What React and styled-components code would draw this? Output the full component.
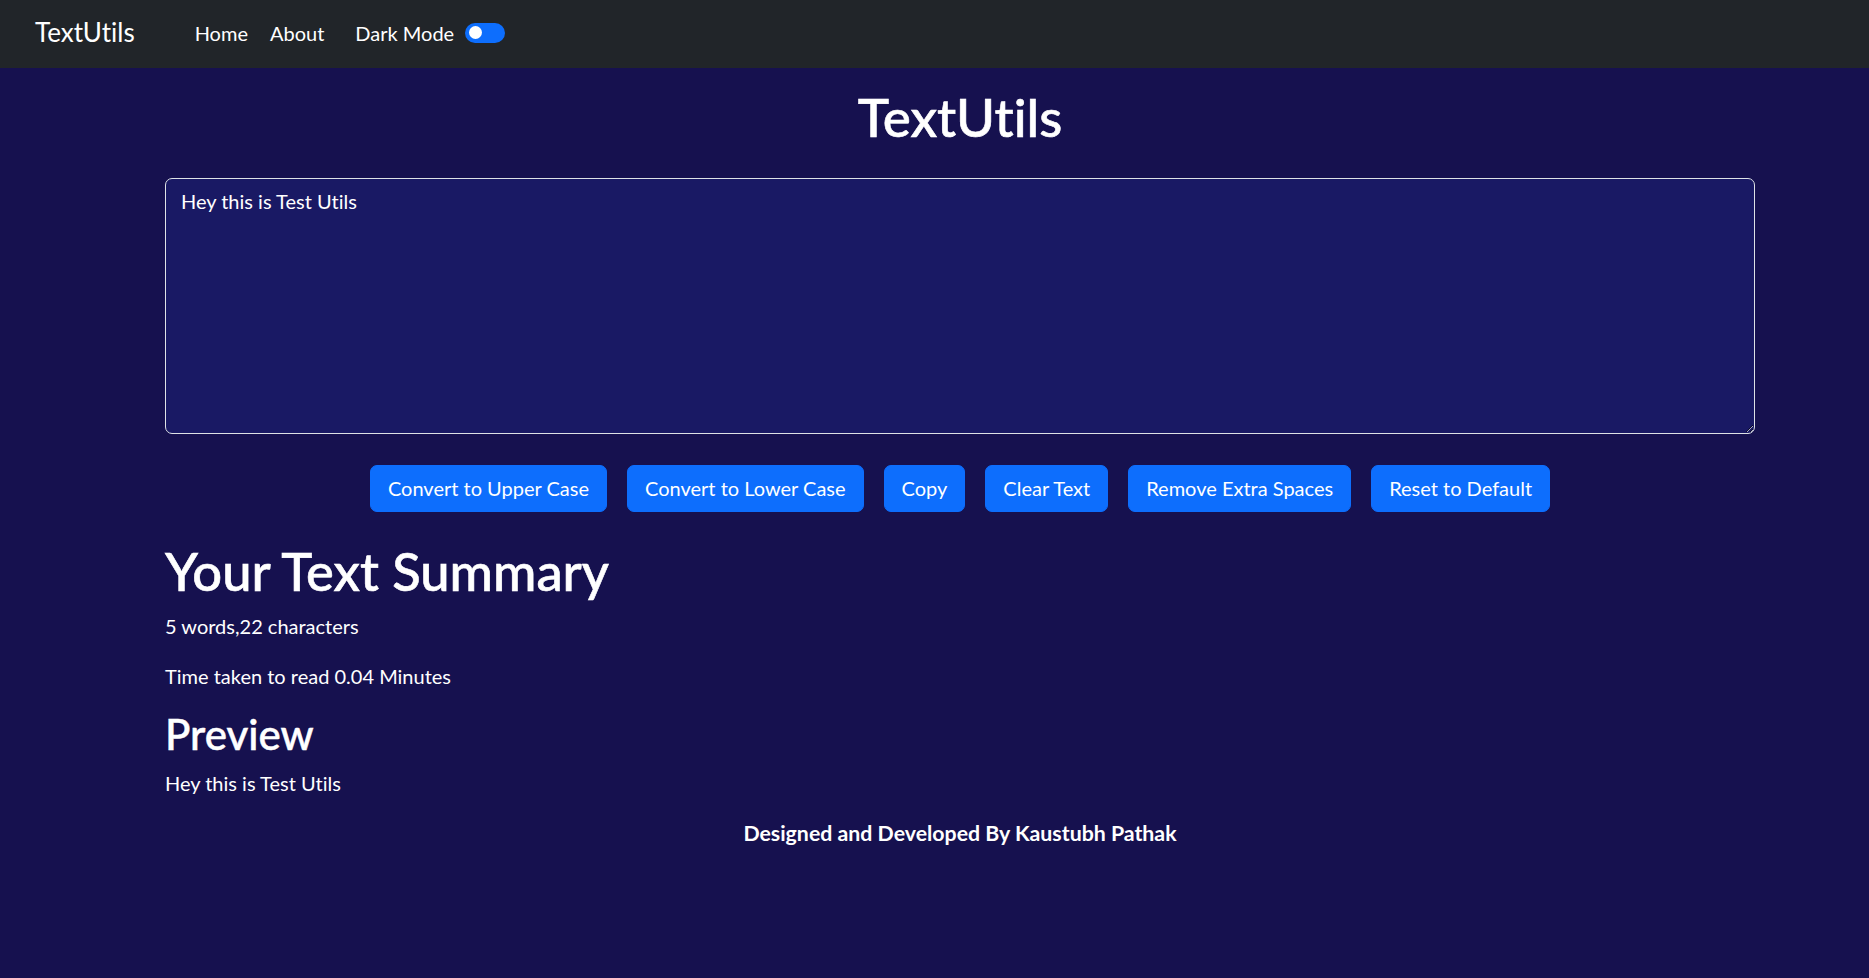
import React, { useState } from "react";
import styled, { createGlobalStyle } from "styled-components";

const GlobalStyle = createGlobalStyle`
  html, body {
    margin: 0;
    background: #16114f;
  }
  body {
    font-family: Lato, "Noto Sans", sans-serif;
    font-variant-ligatures: none;
    color: #ffffff;
  }
  * { box-sizing: border-box; }
`;

const Navbar = styled.nav`
  display: flex;
  align-items: center;
  height: 68px;
  padding: 0 0 3px 35px;
  background: #212529;
`;

const Brand = styled.a`
  font-size: 26px;
  line-height: 1.5;
  color: #ffffff;
  text-decoration: none;
  margin-right: 60px;
`;

const NavList = styled.ul`
  display: flex;
  gap: 22px;
  list-style: none;
  margin: 0;
  padding: 0;
`;

const NavLink = styled.a`
  font-size: 20px;
  line-height: 1.5;
  color: #ffffff;
  text-decoration: none;
`;

const ModeSwitch = styled.label`
  display: flex;
  align-items: center;
  gap: 11px;
  margin-left: 31px;
  font-size: 20px;
  line-height: 1.5;
  cursor: pointer;
`;

const Track = styled.button`
  display: flex;
  align-items: center;
  justify-content: ${(p) => (p.$on ? "flex-start" : "flex-end")};
  width: 40px;
  height: 20px;
  padding: 0 3px 0 4px;
  border: none;
  border-radius: 10px;
  background: #0d6efd;
  cursor: pointer;
`;

const Knob = styled.span`
  width: 13px;
  height: 13px;
  border-radius: 50%;
  background: #ffffff;
`;

const Container = styled.main`
  margin: 0 114px 0 165px;
`;

const Title = styled.h1`
  margin: 17px 0 0;
  text-align: center;
  font-size: 53px;
  font-weight: 500;
  line-height: 1.2;
  -webkit-text-stroke: 0.6px #ffffff;
`;

const TextBox = styled.textarea`
  display: block;
  width: 100%;
  height: 256px;
  margin-top: 29px;
  padding: 7.3px 15px;
  border: 1px solid #dee2e6;
  border-radius: 7px;
  background: #191964;
  color: #ffffff;
  font-family: Lato, "Noto Sans", sans-serif;
  font-variant-ligatures: none;
  font-size: 20px;
  line-height: 30px;
  resize: vertical;
  outline: none;
`;

const ButtonRow = styled.div`
  display: flex;
  justify-content: center;
  gap: 20px;
  margin-top: 31px;
`;

const ActionButton = styled.button`
  padding: 7.5px 17px;
  border: 1px solid #0d6efd;
  border-radius: 7px;
  background: #0d6efd;
  color: #ffffff;
  font-family: Lato, "Noto Sans", sans-serif;
  font-variant-ligatures: none;
  font-size: 20px;
  line-height: 30px;
  cursor: pointer;
`;

const Summary = styled.section`
  margin-top: 27px;
`;

const SummaryHeading = styled.h1`
  margin: 0 0 9px;
  font-size: 52.5px;
  font-weight: 500;
  line-height: 1.2;
  -webkit-text-stroke: 0.6px #ffffff;
`;

const Para = styled.p`
  margin: 0 0 20px;
  font-size: 20px;
  line-height: 1.5;
`;

const PreviewHeading = styled.h2`
  margin: 0 0 11px;
  font-size: 42px;
  font-weight: 500;
  line-height: 1.1;
  -webkit-text-stroke: 0.5px #ffffff;
`;

const Footer = styled.footer`
  text-align: center;
  font-size: 21.3px;
  font-weight: 700;
  line-height: 1.5;
`;

export default function App() {
  const [text, setText] = useState("Hey this is Test Utils");
  const [dark, setDark] = useState(true);

  const words = text.split(/\s+/).filter((w) => w.length !== 0).length;
  const minutes = Math.round(0.008 * words * 1000) / 1000;

  const actions = [
    ["Convert to Upper Case", () => setText(text.toUpperCase())],
    ["Convert to Lower Case", () => setText(text.toLowerCase())],
    ["Copy", () => navigator.clipboard && navigator.clipboard.writeText(text).catch(() => {})],
    ["Clear Text", () => setText("")],
    ["Remove Extra Spaces", () => setText(text.split(/[ ]+/).join(" "))],
    ["Reset to Default", () => setText("Hey this is Test Utils")],
  ];

  return (
    <>
      <GlobalStyle />
      <Navbar>
        <Brand href="#">TextUtils</Brand>
        <NavList>
          <li><NavLink href="#">Home</NavLink></li>
          <li><NavLink href="#">About</NavLink></li>
        </NavList>
        <ModeSwitch>
          Dark Mode
          <Track type="button" $on={dark} onClick={() => setDark(!dark)} aria-label="Dark Mode">
            <Knob />
          </Track>
        </ModeSwitch>
      </Navbar>
      <Container>
        <Title>TextUtils</Title>
        <TextBox rows={8} value={text} onChange={(e) => setText(e.target.value)} />
        <ButtonRow>
          {actions.map(([label, fn]) => (
            <ActionButton key={label} type="button" onClick={fn}>{label}</ActionButton>
          ))}
        </ButtonRow>
        <Summary>
          <SummaryHeading>Your Text Summary</SummaryHeading>
          <Para>{words} words,{text.length} characters</Para>
          <Para>Time taken to read {minutes.toFixed(2)} Minutes</Para>
          <PreviewHeading>Preview</PreviewHeading>
          <Para>{text.length > 0 ? text : "Nothing to preview"}</Para>
        </Summary>
        <Footer>Designed and Developed By Kaustubh Pathak</Footer>
      </Container>
    </>
  );
}
